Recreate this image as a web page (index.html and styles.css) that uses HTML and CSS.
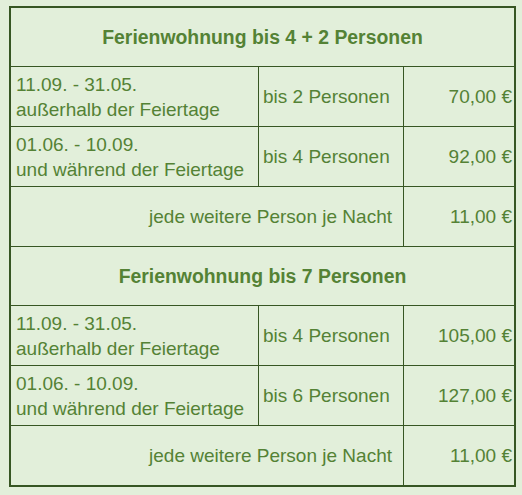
FILE: index.html
```html
<!DOCTYPE html>
<html lang="de">
<head>
<meta charset="utf-8">
<title>Preise</title>
<link rel="stylesheet" href="styles.css">
</head>
<body>
<div class="prices">
  <div class="cell head">Ferienwohnung bis 4 + 2 Personen</div>
  <div class="cell period">11.09. - 31.05.<br>außerhalb der Feiertage</div>
  <div class="cell persons">bis 2 Personen</div>
  <div class="cell price">70,00 €</div>
  <div class="cell period">01.06. - 10.09.<br>und während der Feiertage</div>
  <div class="cell persons">bis 4 Personen</div>
  <div class="cell price">92,00 €</div>
  <div class="cell extra">jede weitere Person je Nacht</div>
  <div class="cell price">11,00 €</div>

  <div class="cell head">Ferienwohnung bis 7 Personen</div>
  <div class="cell period">11.09. - 31.05.<br>außerhalb der Feiertage</div>
  <div class="cell persons">bis 4 Personen</div>
  <div class="cell price">105,00 €</div>
  <div class="cell period">01.06. - 10.09.<br>und während der Feiertage</div>
  <div class="cell persons">bis 6 Personen</div>
  <div class="cell price">127,00 €</div>
  <div class="cell extra">jede weitere Person je Nacht</div>
  <div class="cell price">11,00 €</div>
</div>
</body>
</html>
```
FILE: styles.css
```css
html, body {
  margin: 0;
  padding: 0;
  background: #e2efda;
}
body {
  font-family: "Liberation Sans", Arial, sans-serif;
  font-size: 19px;
  color: #548235;
}
.prices {
  margin: 6px 0 0 9px;
  width: 503px;
  display: grid;
  grid-template-columns: 247px 144px 110px;
  grid-template-rows: 58px 59px 59px 59px 58px 59px 59px 59px;
  gap: 1px;
  border: 2px solid #375623;
  background: #375623;
}
.cell {
  background: #e2efda;
  display: flex;
  align-items: center;
  line-height: 25px;
}
.head {
  grid-column: 1 / 4;
  justify-content: center;
  font-weight: bold;
  font-size: 19.4px;
}
.period {
  padding-left: 5px;
  display: block;
  padding-top: 5px;
}
.persons {
  padding-left: 4px;
}
.price {
  justify-content: flex-end;
  padding-right: 2px;
}
.extra {
  grid-column: 1 / 3;
  justify-content: flex-end;
  padding-right: 11px;
}
```
